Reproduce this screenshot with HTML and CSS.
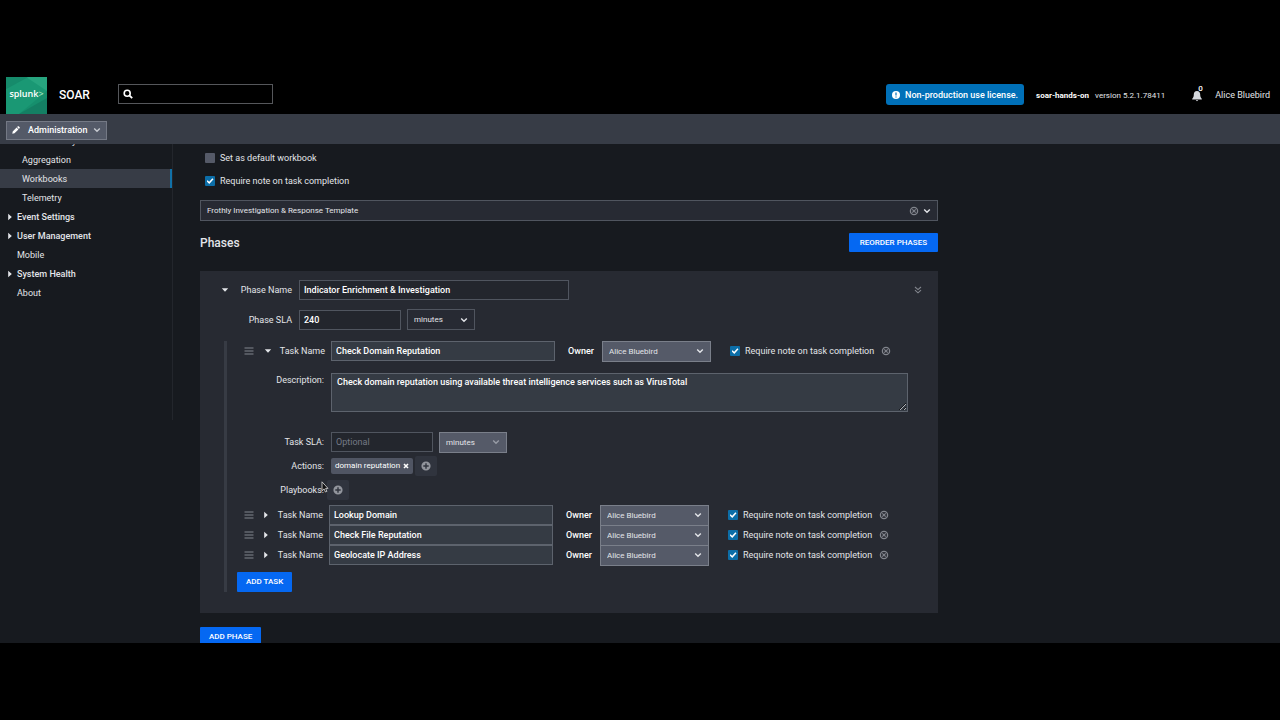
FILE: index.html
```html
<!DOCTYPE html>
<html lang="en">
<head>
<meta charset="utf-8">
<title>SOAR - Workbooks</title>
<link rel="stylesheet" href="styles.css">
</head>
<body>
<svg class="defs" aria-hidden="true">
  <symbol id="chevron" viewBox="0 0 8 8"><path d="M1.2 2.6 4 5.3 6.8 2.6" fill="none" stroke="currentColor" stroke-width="1.4"/></symbol>
  <symbol id="menu" viewBox="0 0 10 8"><path d="M0.5 1h9M0.5 4h9M0.5 7h9" stroke="currentColor" stroke-width="1.1"/></symbol>
  <symbol id="down" viewBox="0 0 8 8"><path d="M.8 2.200h6.400L4 5.800z" fill="currentColor"/></symbol>
  <symbol id="right" viewBox="0 0 8 8"><path d="M2.200 .8v6.400L5.800 4z" fill="currentColor"/></symbol>
  <symbol id="remove" viewBox="0 0 10 10"><circle cx="5" cy="5" r="3.600" fill="none" stroke="currentColor" stroke-width="1.300"/><path d="M3.300 3.300l3.400 3.400M6.700 3.300l-3.400 3.400" stroke="currentColor" stroke-width="1.200"/></symbol>
  <symbol id="plus" viewBox="0 0 10 10"><path fill-rule="evenodd" d="M5 .4a4.600 4.600 0 1 0 0 9.200A4.600 4.600 0 0 0 5 .4zM4.300 2.300h1.400v2h2v1.400h-2v2H4.300v-2h-2V4.300h2z" fill="currentColor"/></symbol>
</svg>
<div class="app">
  <header class="topbar">
    <a class="logo" href="#" aria-label="Splunk home">
      <svg class="logo-art" viewBox="0 0 41 37" preserveAspectRatio="none" aria-hidden="true">
        <rect width="41" height="37" fill="#168f6d"/>
        <path d="M0 12 22 0h19v14L13 37H0z" fill="#1a9874"/>
        <path d="M20 0h21v14z" fill="#27a57f"/>
        <path d="M0 12 22 0H0z" fill="#168b6b"/>
        <path d="M13 37 41 21v16z" fill="#147f63"/>
      </svg>
      <span class="logo-text">splunk<span class="logo-mark">&gt;</span></span>
    </a>
    <span class="product">SOAR</span>
    <label class="search">
      <svg width="10" height="10" viewBox="0 0 10 10" aria-hidden="true"><circle cx="4.2" cy="4.2" r="3" fill="none" stroke="#fff" stroke-width="1.6"/><path d="M6.3 6.3 9.2 9.2" stroke="#fff" stroke-width="1.8"/></svg>
      <input type="search" aria-label="Search">
    </label>
    <button class="license" type="button">
      <svg width="8" height="8" viewBox="0 0 8 8" aria-hidden="true"><circle cx="4" cy="4" r="4" fill="#fff"/><path d="M4 1.6v3M4 5.4v1.1" stroke="#0070b8" stroke-width="1.2"/></svg>
      Non-production use license.
    </button>
    <span class="host">soar-hands-on</span>
    <span class="version">version 5.2.1.78411</span>
    <button class="bell" type="button" aria-label="Notifications">
      <svg width="10" height="12" viewBox="0 0 10 12" aria-hidden="true"><path d="M5 1c-2.200 0-3.200 1.600-3.200 3.600 0 2.200-.6 3.200-1.600 4.200v.6h9.600v-.6c-1-1-1.600-2-1.600-4.200C8.200 2.600 7.200 1 5 1z" fill="#d5d8dd"/><path d="M3.800 10.100h2.400L5 11.200z" fill="#d5d8dd"/></svg>
      <span class="count">0</span>
    </button>
    <a class="user" href="#">Alice Bluebird</a>
  </header>
  <nav class="subbar">
    <button class="admin" type="button">
      <svg width="8" height="8" viewBox="0 0 8 8" aria-hidden="true"><path d="M.3 7.700.7 5.500 4.600 1.600 6.400 3.400 2.500 7.300zM5.100 1.100 5.900.3q.4-.3.800 0l1 1q.3.400 0 .8l-.8.8z" fill="#fff"/></svg>
      <span>Administration</span>
      <svg class="admin-arrow" width="8" height="8"><use href="#chevron"/></svg>
    </button>
  </nav>
  <div class="workspace">
    <aside class="sidebar">
      <ul class="side-list">
        <li><a class="side-link sub" href="#">Multi-tenancy</a></li>
        <li><a class="side-link sub" href="#">Aggregation</a></li>
        <li><a class="side-link sub active" href="#">Workbooks</a></li>
        <li><a class="side-link sub" href="#">Telemetry</a></li>
        <li><a class="side-link group" href="#"><svg width="8" height="8"><use href="#right"/></svg>Event Settings</a></li>
        <li><a class="side-link group" href="#"><svg width="8" height="8"><use href="#right"/></svg>User Management</a></li>
        <li><a class="side-link" href="#">Mobile</a></li>
        <li><a class="side-link group" href="#"><svg width="8" height="8"><use href="#right"/></svg>System Health</a></li>
        <li><a class="side-link" href="#">About</a></li>
      </ul>
    </aside>
    <main class="content">
      <div class="options">
        <label class="check"><input type="checkbox">Set as default workbook</label>
        <label class="check"><input type="checkbox" checked>Require note on task completion</label>
      </div>
      <div class="select template">
        <select aria-label="Workbook template"><option>Frothly Investigation &amp; Response Template</option></select>
        <span class="template-icons">
          <svg class="muted" width="10" height="10"><use href="#remove"/></svg>
          <svg width="8" height="8"><use href="#chevron"/></svg>
        </span>
      </div>
      <div class="heading">
        <h1>Phases</h1>
        <button class="primary" type="button">REORDER PHASES</button>
      </div>
      <section class="panel">
        <div class="phase-row">
          <button class="icon-button toggle" type="button" aria-label="Collapse phase"><svg width="8" height="8"><use href="#down"/></svg></button>
          <label class="phase-label" for="phase-name">Phase Name</label>
          <input class="field phase-name" id="phase-name" type="text" value="Indicator Enrichment &amp; Investigation">
          <button class="icon-button muted expand" type="button" aria-label="Expand all"><svg width="8" height="8" viewBox="0 0 8 8"><path d="M1 1l3 2.600L7 1M1 4.200l3 2.600L7 4.200" fill="none" stroke="currentColor" stroke-width="1.1"/></svg></button>
        </div>
        <div class="phase-row">
          <span class="toggle"></span>
          <label class="phase-label" for="phase-sla">Phase SLA</label>
          <input class="field short" id="phase-sla" type="text" value="240">
          <div class="select unit"><select aria-label="Phase SLA unit"><option>minutes</option></select><svg class="arrow" width="8" height="8"><use href="#chevron"/></svg></div>
        </div>
        <div class="tasks">
          <div class="task-open">
            <div class="task">
              <button class="icon-button muted handle" type="button" aria-label="Move task"><svg width="10" height="8"><use href="#menu"/></svg></button>
              <button class="icon-button fold" type="button" aria-label="Collapse task"><svg width="8" height="8"><use href="#down"/></svg></button>
              <label class="task-label" for="task-1">Task Name</label>
              <input class="field filled task-name" id="task-1" type="text" value="Check Domain Reputation">
              <label class="owner" for="owner-1">Owner</label>
              <div class="select filled owner-select"><select id="owner-1"><option>Alice Bluebird</option></select><svg class="arrow" width="8" height="8"><use href="#chevron"/></svg></div>
              <label class="check"><input type="checkbox" checked>Require note on task completion</label>
              <button class="icon-button muted delete" type="button" aria-label="Delete task"><svg width="10" height="10"><use href="#remove"/></svg></button>
            </div>
            <div class="details">
              <label class="detail-label top" for="description">Description:</label>
              <textarea class="field filled" id="description">Check domain reputation using available threat intelligence services such as VirusTotal</textarea>
              <label class="detail-label" for="task-sla">Task SLA:</label>
              <div class="line sla">
                <input class="field short" id="task-sla" type="text" placeholder="Optional">
                <div class="select filled unit dim"><select aria-label="Task SLA unit"><option>minutes</option></select><svg class="arrow" width="8" height="8"><use href="#chevron"/></svg></div>
              </div>
              <span class="detail-label">Actions:</span>
              <div class="line">
                <button class="chip" type="button">domain reputation <svg width="6" height="6" viewBox="0 0 6 6" aria-hidden="true"><path d="M1 1l4 4M5 1 1 5" stroke="#fff" stroke-width="1.600"/></svg></button>
                <button class="add" type="button" aria-label="Add action"><svg width="10" height="10"><use href="#plus"/></svg></button>
              </div>
              <span class="detail-label">Playbooks:</span>
              <div class="line playbooks">
                <button class="add" type="button" aria-label="Add playbook"><svg width="10" height="10"><use href="#plus"/></svg></button>
                <svg class="cursor" width="8" height="12" viewBox="0 0 8 12" aria-hidden="true"><path d="M1 .8v9l2.100-1.900 1.300 3.100 1.500-.6-1.300-3H7z" fill="#111" stroke="#ddd" stroke-width=".8"/></svg>
              </div>
            </div>
          </div>
          <div class="task">
            <button class="icon-button muted handle" type="button" aria-label="Move task"><svg width="10" height="8"><use href="#menu"/></svg></button>
            <button class="icon-button fold" type="button" aria-label="Expand task"><svg width="8" height="8"><use href="#right"/></svg></button>
            <label class="task-label" for="task-2">Task Name</label>
            <input class="field filled task-name" id="task-2" type="text" value="Lookup Domain">
            <label class="owner" for="owner-2">Owner</label>
            <div class="select filled owner-select"><select id="owner-2"><option>Alice Bluebird</option></select><svg class="arrow" width="8" height="8"><use href="#chevron"/></svg></div>
            <label class="check"><input type="checkbox" checked>Require note on task completion</label>
            <button class="icon-button muted delete" type="button" aria-label="Delete task"><svg width="10" height="10"><use href="#remove"/></svg></button>
          </div>
          <div class="task">
            <button class="icon-button muted handle" type="button" aria-label="Move task"><svg width="10" height="8"><use href="#menu"/></svg></button>
            <button class="icon-button fold" type="button" aria-label="Expand task"><svg width="8" height="8"><use href="#right"/></svg></button>
            <label class="task-label" for="task-3">Task Name</label>
            <input class="field filled task-name" id="task-3" type="text" value="Check File Reputation">
            <label class="owner" for="owner-3">Owner</label>
            <div class="select filled owner-select"><select id="owner-3"><option>Alice Bluebird</option></select><svg class="arrow" width="8" height="8"><use href="#chevron"/></svg></div>
            <label class="check"><input type="checkbox" checked>Require note on task completion</label>
            <button class="icon-button muted delete" type="button" aria-label="Delete task"><svg width="10" height="10"><use href="#remove"/></svg></button>
          </div>
          <div class="task">
            <button class="icon-button muted handle" type="button" aria-label="Move task"><svg width="10" height="8"><use href="#menu"/></svg></button>
            <button class="icon-button fold" type="button" aria-label="Expand task"><svg width="8" height="8"><use href="#right"/></svg></button>
            <label class="task-label" for="task-4">Task Name</label>
            <input class="field filled task-name" id="task-4" type="text" value="Geolocate IP Address">
            <label class="owner" for="owner-4">Owner</label>
            <div class="select filled owner-select"><select id="owner-4"><option>Alice Bluebird</option></select><svg class="arrow" width="8" height="8"><use href="#chevron"/></svg></div>
            <label class="check"><input type="checkbox" checked>Require note on task completion</label>
            <button class="icon-button muted delete" type="button" aria-label="Delete task"><svg width="10" height="10"><use href="#remove"/></svg></button>
          </div>
          <button class="primary small add-task" type="button">ADD TASK</button>
        </div>
      </section>
      <button class="primary small add-phase" type="button">ADD PHASE</button>
    </main>
  </div>
</div>
</body>
</html>
```
FILE: styles.css
```css
* { box-sizing: border-box; }
body {
  margin: 0;
  padding: 77px 0;
  height: 100vh;
  background: #000;
  color: #e3e5e9;
  font: 9px/12px Roboto, "Liberation Sans", sans-serif;
  overflow: hidden;
}
svg { display: block; flex: none; }
.defs { display: none; }
button, input, select, textarea { font: inherit; color: inherit; margin: 0; }
button { border: 0; padding: 0; background: none; white-space: nowrap; }
a { color: inherit; text-decoration: none; }

.app { height: 100%; display: flex; flex-direction: column; background: #171a1f; overflow: hidden; }

.topbar { display: flex; align-items: center; flex: none; height: 37px; padding: 0 10px 0 6px; background: #000; }
.logo { display: grid; place-items: center; width: 41px; height: 37px; margin-right: 12px; }
.logo > * { grid-area: 1 / 1; }
.logo-art { width: 41px; height: 37px; }
.logo-text { color: #fff; font: 600 9px/12px "Open Sans", sans-serif; padding-bottom: 3px; }
.logo-mark { color: #a5e5bd; }
.product { font-size: 12px; line-height: 16px; font-weight: 500; color: #fff; padding-bottom: 2px; }
.search { display: flex; align-items: center; gap: 4px; width: 155px; height: 20px; margin: 0 auto 4px 28px; padding: 0 4px; border: 1px solid #55575b; }
.search input { flex: 1; min-width: 0; border: 0; padding: 0; background: none; outline: 0; }
.license { display: flex; align-items: center; gap: 5px; height: 21px; padding: 0 6px; margin: 0 12px 2px 0; border-radius: 3px; background: #0070b8; color: #fff; font-weight: 500; }
.host { font-size: 8px; font-weight: 700; color: #fff; margin-right: 6px; }
.version { font-size: 8px; margin-right: 27px; }
.bell { position: relative; margin-right: 13px; }
.count { position: absolute; left: 6px; top: -5px; font-size: 8px; line-height: 8px; color: #fff; font-weight: 500; }
.user { padding-bottom: 2px; }

.subbar { display: flex; align-items: center; flex: none; height: 30px; padding: 2px 6px 0; background: #373c46; }
.admin { display: flex; align-items: center; height: 19px; padding: 0 5px; border: 1px solid #747985; background: #545a68; color: #fff; font-weight: 500; }
.admin span { margin: 0 6px 0 8px; }
.admin-arrow { color: #c9ccd2; }

.workspace { flex: 1; min-height: 0; display: flex; align-items: flex-start; overflow: hidden; }
.sidebar { flex: none; width: 173px; height: 276px; border-right: 1px solid #23262c; }
.side-list { list-style: none; margin: -13px 0 0; padding: 0; }
.side-link { display: flex; align-items: center; height: 19px; padding-left: 17px; }
.side-link.sub { padding-left: 22px; }
.side-link.group { padding-left: 6px; gap: 3px; font-weight: 500; }
.side-link.active { background: #373c46; border-right: 2px solid #1171a8; }

.content { flex: 1; max-width: 765px; padding: 8px 0 0 27px; }
.options { display: grid; gap: 11px; padding: 0 5px; margin-bottom: 13px; }
.check { display: flex; align-items: center; gap: 5px; white-space: nowrap; }
.check input { appearance: none; display: grid; place-items: center; width: 10px; height: 10px; border-radius: 1px; background: #555a68; }
.check input:checked { background: #0c6ea8; }
.check input:checked::before { content: ""; width: 7px; height: 6px; background: #fff; clip-path: polygon(0 55%, 15% 38%, 38% 62%, 84% 5%, 100% 20%, 40% 98%); }

.select { display: grid; align-items: center; height: 21px; }
.select > * { grid-area: 1 / 1; }
.select select { appearance: none; width: 100%; height: 100%; padding: 1px 6px 0; font-size: 8px; border: 1px solid #50555f; border-radius: 0; background: #272a33; outline: 0; }
.select.filled select { background: #555a68; border-color: #7a7f8a; }
.arrow { justify-self: end; margin-right: 7px; pointer-events: none; }
.dim .arrow { color: #989ca6; }
.template-icons { display: flex; align-items: center; gap: 4px; justify-self: end; margin-right: 7px; pointer-events: none; }
.muted { color: #82858d; }
.unit { width: 68px; }

.heading { display: flex; align-items: center; justify-content: space-between; margin: 12px 0 19px; }
h1 { margin: 0; font-size: 12px; line-height: 16px; font-weight: 500; }
.primary { display: block; height: 19px; padding: 0 11px; border-radius: 1px; background: #0568f2; color: #fff; font-size: 8px; font-weight: 500; }
.primary.small { height: 20px; padding: 0 9px; }

.panel { background: #272a32; padding: 9px 30px 21px 21px; }
.phase-row { display: flex; align-items: center; margin-bottom: 9px; }
.toggle { width: 8px; margin-right: 8px; }
.phase-label { width: 55px; text-align: right; margin-right: 7px; }
.field { height: 20px; padding: 0 4px; border: 1px solid #50555f; border-radius: 0; background: #23262d; color: #fff; font-weight: 500; outline: 0; min-width: 0; }
.field.filled { background: #353b44; border-color: #5d636d; }
.phase-name { width: 270px; }
.short { width: 102px; margin-right: 6px; }
.icon-button { display: grid; place-items: center; }
.expand { margin-left: auto; margin-right: -14px; }

.tasks { margin: 11px 0 0 3px; padding-left: 17px; border-left: 3px solid #373b44; }
.task { display: flex; align-items: center; height: 20px; }
.task-open { padding: 0 0 3px 2px; }
.handle { width: 10px; margin-right: 8px; }
.task-open .handle { margin-left: -2px; margin-right: 10px; }
.handle, .fold { flex: none; }
.fold { width: 8px; margin-right: 3px; }
.task-label { width: 50px; text-align: right; margin-right: 6px; }
.task-name { width: 224px; margin-right: 13px; }
.owner { color: #fff; font-weight: 500; width: 28px; margin-right: 6px; }
.owner-select { width: 109px; margin-right: 19px; }
.delete { margin-left: 7px; }
.details { display: grid; grid-template-columns: 78px 1fr; column-gap: 7px; align-items: center; margin-top: 12px; }
.detail-label { text-align: right; color: #e3e5e9; }
.detail-label.top { align-self: start; padding-top: 1px; }
textarea.field { display: block; width: 100%; height: 39px; padding: 2px 5px; }
.line { display: flex; align-items: center; height: 24px; }
.details > [for="task-sla"], .sla { margin-top: 18px; }
.field::placeholder { color: #747985; font-weight: 400; opacity: 1; }
.chip { display: flex; align-items: center; gap: 3px; height: 16px; padding: 0 4px; margin-right: 2px; border-radius: 2px; background: #505563; font-size: 8px; color: #fff; }
.add { display: grid; place-items: center; width: 22px; height: 20px; border-radius: 2px; background: #30343e; color: #92959d; }
.playbooks { position: relative; margin-left: -4px; }
.cursor { position: absolute; left: -6px; top: 3px; }
.add-task { margin-top: 7px; margin-left: -7px; }
.add-phase { margin-top: 14px; }
```
